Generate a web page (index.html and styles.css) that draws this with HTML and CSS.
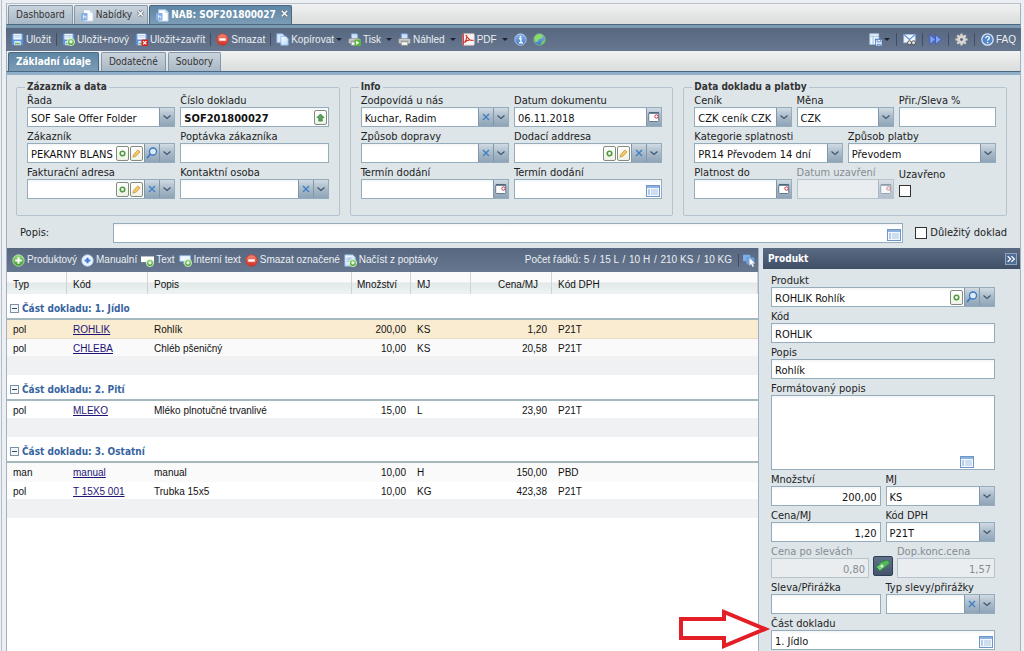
FILE: index.html
```html
<!DOCTYPE html>
<html lang="cs">
<head>
<meta charset="utf-8">
<title>NAB: SOF201800027</title>
<link rel="stylesheet" href="styles.css">
</head>
<body>
<svg class="sprite" aria-hidden="true">
  <defs>
    <linearGradient id="gBlue" x1="0" y1="0" x2="0" y2="1"><stop offset="0" stop-color="#8ab4ea"/><stop offset="1" stop-color="#3f77c4"/></linearGradient>
    <linearGradient id="gGreen" x1="0" y1="0" x2="0" y2="1"><stop offset="0" stop-color="#9bdc7c"/><stop offset="1" stop-color="#3c9a2e"/></linearGradient>
    <linearGradient id="gRed" x1="0" y1="0" x2="0" y2="1"><stop offset="0" stop-color="#f58a78"/><stop offset="1" stop-color="#d02f22"/></linearGradient>
    <linearGradient id="gPage" x1="0" y1="0" x2="1" y2="1"><stop offset="0" stop-color="#ffffff"/><stop offset="1" stop-color="#b9d6f5"/></linearGradient>
  </defs>
  <symbol id="i-disk" viewBox="0 0 16 16"><rect x="1" y="1" width="14" height="14" rx="1" fill="#5c93dc"/><rect x="3" y="1" width="10" height="7" fill="#f4f9ff"/><path d="M4 3h8M4 5h8" stroke="#a9c4e6"/><rect x="4" y="10" width="8" height="5" fill="#e6eef7"/><rect x="5" y="12" width="6" height="2" fill="#6dbb55"/></symbol>
  <symbol id="i-page" viewBox="0 0 16 16"><path d="M3 1h9l3 3v11H3z" fill="#fbfdff" stroke="#a9c4e2"/><path d="M12 1v3h3" fill="#dceafa" stroke="#a9c4e2"/><rect x="0" y="5" width="8" height="9" rx="1" fill="#86aee0"/><path d="M3 7v5M3 9h3v3" fill="none" stroke="#f2f8ff"/></symbol>
  <symbol id="i-plusdot" viewBox="0 0 16 16"><circle cx="11" cy="11" r="4.500" fill="url(#gGreen)" stroke="#e7f7df"/><path d="M9 11h4M11 9v4" stroke="#fff" stroke-width="1.500"/></symbol>
  <symbol id="i-disknew" viewBox="0 0 16 16"><use href="#i-disk"/><use href="#i-plusdot"/></symbol>
  <symbol id="i-diskclose" viewBox="0 0 16 16"><use href="#i-disk"/><rect x="8" y="8" width="8" height="8" rx="1" fill="#d3251d"/><path d="M10 10l4 4M14 10l-4 4" stroke="#fff" stroke-width="1.500"/></symbol>
  <symbol id="i-minus" viewBox="0 0 16 16"><circle cx="8" cy="8" r="7" fill="url(#gRed)" stroke="#c9362a"/><rect x="4" y="6.500" width="8" height="3" fill="#fff"/></symbol>
  <symbol id="i-plus" viewBox="0 0 16 16"><circle cx="8" cy="8" r="7" fill="url(#gGreen)" stroke="#c4e8b6"/><path d="M4 8h8M8 4v8" stroke="#fff" stroke-width="2.500"/></symbol>
  <symbol id="i-plusblue" viewBox="0 0 16 16"><circle cx="8" cy="8" r="7" fill="#eaf3ff" stroke="#b9d2f0"/><path d="M4.500 8h7M8 4.500v7" stroke="#3f7bd0" stroke-width="2.500"/></symbol>
  <symbol id="i-copy" viewBox="0 0 16 16"><path d="M1 1h7l2 2v9H1z" fill="#d8eaff" stroke="#85b0e4"/><path d="M6 4h6l3 3v8H6z" fill="url(#gPage)" stroke="#85b0e4"/></symbol>
  <symbol id="i-print" viewBox="0 0 16 16"><path d="M4 1h7l1 1v6H4z" fill="#cfe4fb" stroke="#6f9dd0"/><rect x="1" y="7" width="14" height="6" rx="1" fill="#d9d9d9" stroke="#8c8c8c"/><path d="M3 10h10" stroke="#666"/><rect x="4" y="11" width="8" height="4" fill="#fff" stroke="#999"/></symbol>
  <symbol id="i-printgo" viewBox="0 0 16 16"><use href="#i-print"/><rect x="8" y="8" width="8" height="8" rx="1" fill="#58b33f"/><path d="M10 9.500l4 2.500-4 2.500z" fill="#fff"/></symbol>
  <symbol id="i-pdf" viewBox="0 0 16 16"><rect x="1" y="1" width="14" height="14" rx="1" fill="#fbf6f5" stroke="#d9c4c2"/><path d="M1.500 1v14" stroke="#c32b22" stroke-width="1.500"/><path d="M5 3c2 0 1 4-2 9 2-3 6-4 10-3-3 1-6-3-8-6z" fill="none" stroke="#cc2a20" stroke-width="1.300"/></symbol>
  <symbol id="i-info" viewBox="0 0 16 16"><circle cx="8" cy="8" r="7" fill="url(#gBlue)" stroke="#bcd6f5"/><path d="M6 7h2.500v5M6 12h5" stroke="#fff" stroke-width="1.600" fill="none"/><circle cx="8" cy="4.500" r="1.200" fill="#fff"/></symbol>
  <symbol id="i-globe" viewBox="0 0 16 16"><circle cx="8" cy="8" r="7" fill="url(#gBlue)" stroke="#7fca6a"/><path d="M2 6c1-4 6-5 9-4l1 4-4 1-3 4-3-1z" fill="#8bdc68"/><path d="M10 12l4-4 1 1c-1 3-3 5-5 5z" fill="#7bd058"/></symbol>
  <symbol id="i-layout" viewBox="0 0 16 16"><rect x="1" y="1" width="11" height="13" fill="#eef5fd" stroke="#a9c6e4"/><path d="M1 4h11M5 4v10M7 7h4M7 9h3" stroke="#8eb6d8"/><rect x="8" y="8" width="8" height="8" fill="#e9f2ff" stroke="#4f7fc0"/><path d="M10 8v3h4V8M10 16v-2h4v2" stroke="#4f7fc0" fill="none"/></symbol>
  <symbol id="i-mail" viewBox="0 0 16 16"><rect x="1" y="2" width="14" height="10" fill="#f3f8ff" stroke="#9fc0e6"/><path d="M1 2l7 6 7-6" fill="none" stroke="#5c8fcf" stroke-width="1.500"/><circle cx="8" cy="12" r="2.500" fill="#ddd" stroke="#444"/><circle cx="13" cy="12" r="2.500" fill="#ddd" stroke="#444"/></symbol>
  <symbol id="i-ff" viewBox="0 0 16 16"><path d="M1 2l7 6-7 6zM8 2l7 6-7 6z" fill="#7fa2f4" stroke="#3557c8"/></symbol>
  <symbol id="i-gear" viewBox="0 0 16 16"><path d="M8 0.500v15M0.500 8h15M2.700 2.700l10.600 10.600M13.300 2.700L2.700 13.300" stroke="#d8d4cd" stroke-width="2.600"/><circle cx="8" cy="8" r="5.500" fill="#d8d4cd"/><circle cx="8" cy="8" r="2.500" fill="#5d6d86" stroke="#f6f4f0"/></symbol>
  <symbol id="i-help" viewBox="0 0 16 16"><circle cx="8" cy="8" r="7" fill="#4f86c9" stroke="#dcebfb" stroke-width="1.500"/><path d="M5.800 6.500c0-3 4.500-3 4.500-.3 0 1.500-2.200 1.600-2.200 3.300" fill="none" stroke="#fff" stroke-width="1.500"/><circle cx="8.100" cy="11.800" r="1" fill="#fff"/></symbol>
  <symbol id="i-textadd" viewBox="0 0 16 16"><rect x="0" y="3" width="16" height="7" fill="#fff"/><use href="#i-plusdot"/></symbol>
  <symbol id="i-noteadd" viewBox="0 0 16 16"><path d="M1 2h13v7H8l-2 3V9H1z" fill="#eef6ff" stroke="#8fb9e8"/><use href="#i-plusdot"/></symbol>
  <symbol id="i-pageadd" viewBox="0 0 16 16"><path d="M1 1h10l3 3v11H1z" fill="url(#gPage)" stroke="#7fabdc"/><path d="M3 5h7M3 7h8M3 9h6" stroke="#8fb7e3"/><use href="#i-plusdot"/></symbol>
  <symbol id="i-select" viewBox="0 0 16 16"><rect x="0" y="1" width="9" height="8" rx="1" fill="#7eaee8"/><rect x="4" y="4" width="10" height="9" rx="1" fill="#6b9fe0"/><path d="M8 5v9l2-2 2 4 1.500-1-2-3.500h3z" fill="#fff" stroke="#ccc" stroke-width=".5"/></symbol>
  <symbol id="i-chev" viewBox="0 0 10 10"><path d="M1.500 3.500L5 6.500l3.500-3" fill="none" stroke="#3f566e" stroke-width="1.200"/></symbol>
  <symbol id="i-x" viewBox="0 0 10 10"><path d="M2 2l6 6M8 2L2 8" fill="none" stroke="#3f7fc6" stroke-width="1.400"/></symbol>
  <symbol id="i-close" viewBox="0 0 10 10"><path d="M2 2l6 6M8 2L2 8" fill="none" stroke="#5c6b7a" stroke-width="3"/><path d="M2 2l6 6M8 2L2 8" fill="none" stroke="#fff" stroke-width="1.600"/></symbol>
  <symbol id="i-search" viewBox="0 0 12 12"><circle cx="7" cy="4.500" r="3.500" fill="#dcebfa" stroke="#3a78bf" stroke-width="1.300"/><path d="M4.500 7L1 11" stroke="#3a78bf" stroke-width="1.800"/></symbol>
  <symbol id="i-ring" viewBox="0 0 10 10"><circle cx="5" cy="5" r="2.500" fill="#fff" stroke="#4f9a3d" stroke-width="1.800"/></symbol>
  <symbol id="i-pencil" viewBox="0 0 10 10"><path d="M1 9l1-3 4.500-5L9 3.200 4.500 8z" fill="#f4c862" stroke="#c89036" stroke-width=".8"/></symbol>
  <symbol id="i-up" viewBox="0 0 10 10"><path d="M5 1l4 4H7v4H3V5H1z" fill="#55a559" stroke="#2d7d38" stroke-width=".7"/></symbol>
  <symbol id="i-cal" viewBox="0 0 12 12"><rect x=".7" y="1.500" width="10" height="9" rx="1" fill="#fff" stroke="#66788c"/><path d="M1 2h10" stroke="#4a5f78" stroke-width="1.500"/><circle cx="8.500" cy="5.500" r="1.700" fill="#fff" stroke="#b8324a"/></symbol>
  <symbol id="i-list" viewBox="0 0 14 12"><rect x=".5" y=".5" width="13" height="11" fill="#f3f8fe" stroke="#6d97cb"/><path d="M1 2h12" stroke="#8db2de" stroke-width="2"/><path d="M5 5h7M5 7h7M5 9h7" stroke="#a9c3e2"/><path d="M2 5h2M2 7h2M2 9h2" stroke="#7ca1d2"/></symbol>
  <symbol id="i-money" viewBox="0 0 16 16"><path d="M1 9l7-5 4 3-7 6z" fill="#6fcf72" stroke="#2f8a42"/><path d="M4 5l8-3 3 3-6 5" fill="#57b760" stroke="#2f8a42"/><circle cx="7" cy="8" r="1.500" fill="#d4f5cf"/></symbol>
  <symbol id="i-expand" viewBox="0 0 12 12"><path d="M2 2.500L5.500 6 2 9.500M6.500 2.500L10 6 6.500 9.500" fill="none" stroke="#fff" stroke-width="1.500"/></symbol>
  <symbol id="i-fold" viewBox="0 0 9 9"><rect x=".5" y=".5" width="8" height="8" fill="#f4f7fa" stroke="#7d8fa3"/><path d="M2 4.500h5" stroke="#32475e"/></symbol>
</svg>

<main class="app">
  <nav class="tabs tabs-main">
    <button class="tab">Dashboard</button>
    <button class="tab tab-file"><svg class="ico"><use href="#i-page"/></svg>Nabídky<svg class="tab-x"><use href="#i-close"/></svg></button>
    <button class="tab tab-file active"><svg class="ico"><use href="#i-page"/></svg>NAB: SOF201800027<svg class="tab-x"><use href="#i-close"/></svg></button>
  </nav>

  <div class="bar bar-main">
    <button class="tool"><svg class="ico"><use href="#i-disk"/></svg>Uložit</button><i class="sep"></i>
    <button class="tool"><svg class="ico"><use href="#i-disknew"/></svg>Uložit+nový</button>
    <button class="tool"><svg class="ico"><use href="#i-diskclose"/></svg>Uložit+zavřít</button><i class="sep"></i>
    <button class="tool"><svg class="ico"><use href="#i-minus"/></svg>Smazat</button><i class="sep"></i>
    <button class="tool menu tight"><svg class="ico"><use href="#i-copy"/></svg>Kopírovat</button>
    <button class="tool menu"><svg class="ico"><use href="#i-printgo"/></svg>Tisk</button>
    <button class="tool menu"><svg class="ico"><use href="#i-print"/></svg>Náhled</button>
    <button class="tool menu"><svg class="ico"><use href="#i-pdf"/></svg>PDF</button>
    <button class="tool" aria-label="Informace"><svg class="ico"><use href="#i-info"/></svg></button>
    <button class="tool" aria-label="Web"><svg class="ico"><use href="#i-globe"/></svg></button>
    <span class="fill"></span>
    <div class="bar-end">
      <button class="tool menu tight" aria-label="Rozložení"><svg class="ico"><use href="#i-layout"/></svg></button><i class="sep"></i>
      <button class="tool" aria-label="Pošta"><svg class="ico"><use href="#i-mail"/></svg></button><i class="sep"></i>
      <button class="tool" aria-label="Další"><svg class="ico"><use href="#i-ff"/></svg></button><i class="sep"></i>
      <button class="tool" aria-label="Nastavení"><svg class="ico"><use href="#i-gear"/></svg></button><i class="sep"></i>
      <button class="tool"><svg class="ico"><use href="#i-help"/></svg>FAQ</button>
    </div>
  </div>

  <nav class="tabs tabs-sub">
    <button class="tab active">Základní údaje</button>
    <button class="tab">Dodatečné</button>
    <button class="tab">Soubory</button>
  </nav>

  <form class="head-form">
    <div class="groups">
      <fieldset>
        <legend>Zázazník a data</legend>
        <div class="row">
          <div class="field"><label for="rada">Řada</label><div class="ctl"><select id="rada"><option>SOF Sale Offer Folder</option></select><span class="trig"><svg><use href="#i-chev"/></svg></span></div></div>
          <div class="field"><label for="cislo">Číslo dokladu</label><div class="ctl"><input class="strong" id="cislo" value="SOF201800027"><button type="button" class="mini" aria-label="Načíst číslo"><svg><use href="#i-up"/></svg></button></div></div>
        </div>
        <div class="row">
          <div class="field"><label for="zak">Zákazník</label><div class="ctl"><input id="zak" value="PEKARNY BLANS"><button type="button" class="mini" aria-label="Otevřít"><svg><use href="#i-ring"/></svg></button><button type="button" class="mini" aria-label="Upravit"><svg><use href="#i-pencil"/></svg></button><button type="button" class="trig" aria-label="Hledat"><svg class="wide"><use href="#i-search"/></svg></button><button type="button" class="trig" aria-label="Rozbalit"><svg><use href="#i-chev"/></svg></button></div></div>
          <div class="field"><label for="popt">Poptávka zákazníka</label><div class="ctl"><input id="popt"></div></div>
        </div>
        <div class="row">
          <div class="field"><label for="fakt">Fakturační adresa</label><div class="ctl"><input id="fakt"><button type="button" class="mini" aria-label="Otevřít"><svg><use href="#i-ring"/></svg></button><button type="button" class="mini" aria-label="Upravit"><svg><use href="#i-pencil"/></svg></button><button type="button" class="trig" aria-label="Vymazat"><svg><use href="#i-x"/></svg></button><button type="button" class="trig" aria-label="Rozbalit"><svg><use href="#i-chev"/></svg></button></div></div>
          <div class="field"><label for="kont">Kontaktní osoba</label><div class="ctl"><input id="kont"><button type="button" class="trig" aria-label="Vymazat"><svg><use href="#i-x"/></svg></button><button type="button" class="trig" aria-label="Rozbalit"><svg><use href="#i-chev"/></svg></button></div></div>
        </div>
      </fieldset>

      <fieldset>
        <legend>Info</legend>
        <div class="row">
          <div class="field"><label for="zodp">Zodpovídá u nás</label><div class="ctl"><input id="zodp" value="Kuchar, Radim"><button type="button" class="trig" aria-label="Vymazat"><svg><use href="#i-x"/></svg></button><button type="button" class="trig" aria-label="Rozbalit"><svg><use href="#i-chev"/></svg></button></div></div>
          <div class="field"><label for="datum">Datum dokumentu</label><div class="ctl"><input id="datum" value="06.11.2018"><button type="button" class="trig" aria-label="Kalendář"><svg class="wide"><use href="#i-cal"/></svg></button></div></div>
        </div>
        <div class="row">
          <div class="field"><label for="dopr">Způsob dopravy</label><div class="ctl"><input id="dopr"><button type="button" class="trig" aria-label="Vymazat"><svg><use href="#i-x"/></svg></button><button type="button" class="trig" aria-label="Rozbalit"><svg><use href="#i-chev"/></svg></button></div></div>
          <div class="field"><label for="dod">Dodací addresa</label><div class="ctl"><input id="dod"><button type="button" class="mini" aria-label="Otevřít"><svg><use href="#i-ring"/></svg></button><button type="button" class="mini" aria-label="Upravit"><svg><use href="#i-pencil"/></svg></button><button type="button" class="trig" aria-label="Vymazat"><svg><use href="#i-x"/></svg></button><button type="button" class="trig" aria-label="Rozbalit"><svg><use href="#i-chev"/></svg></button></div></div>
        </div>
        <div class="row">
          <div class="field"><label for="term1">Termín dodání</label><div class="ctl"><input id="term1"><button type="button" class="trig" aria-label="Kalendář"><svg class="wide"><use href="#i-cal"/></svg></button></div></div>
          <div class="field"><label for="term2">Termín dodání</label><div class="ctl"><input id="term2"><button type="button" class="listbtn" aria-label="Texty"><svg><use href="#i-list"/></svg></button></div></div>
        </div>
      </fieldset>

      <fieldset>
        <legend>Data dokladu a platby</legend>
        <div class="row">
          <div class="field"><label for="cenik">Ceník</label><div class="ctl"><select id="cenik"><option>CZK ceník CZK [</option></select><span class="trig"><svg><use href="#i-chev"/></svg></span></div></div>
          <div class="field"><label for="mena">Měna</label><div class="ctl"><select id="mena"><option>CZK</option></select><span class="trig"><svg><use href="#i-chev"/></svg></span></div></div>
          <div class="field"><label for="prir">Přir./Sleva %</label><div class="ctl"><input id="prir"></div></div>
        </div>
        <div class="row">
          <div class="field"><label for="kat">Kategorie splatnosti</label><div class="ctl"><select id="kat"><option>PR14 Převodem 14 dní</option></select><span class="trig"><svg><use href="#i-chev"/></svg></span></div></div>
          <div class="field"><label for="plat">Způsob platby</label><div class="ctl"><select id="plat"><option>Převodem</option></select><span class="trig"><svg><use href="#i-chev"/></svg></span></div></div>
        </div>
        <div class="row">
          <div class="field"><label for="platdo">Platnost do</label><div class="ctl"><input id="platdo"><button type="button" class="trig" aria-label="Kalendář"><svg class="wide"><use href="#i-cal"/></svg></button></div></div>
          <div class="field off"><label for="uzav">Datum uzavření</label><div class="ctl"><input id="uzav" disabled><button type="button" class="trig" disabled aria-label="Kalendář"><svg class="wide"><use href="#i-cal"/></svg></button></div></div>
          <div class="field check-field"><label for="uzavreno">Uzavřeno</label><input type="checkbox" id="uzavreno"></div>
        </div>
      </fieldset>
    </div>

    <div class="desc">
      <label class="desc-label" for="popis">Popis:</label>
      <div class="ctl desc-ctl"><input id="popis"><button type="button" class="listbtn" aria-label="Texty"><svg><use href="#i-list"/></svg></button></div>
      <label class="flag"><input type="checkbox">Důležitý doklad</label>
    </div>
  </form>

  <div class="lower">
    <section class="grid">
      <div class="bar bar-grid">
        <button class="tool"><svg class="ico"><use href="#i-plus"/></svg>Produktový</button>
        <button class="tool"><svg class="ico"><use href="#i-plusblue"/></svg>Manualní</button>
        <button class="tool"><svg class="ico"><use href="#i-textadd"/></svg>Text</button>
        <button class="tool"><svg class="ico"><use href="#i-noteadd"/></svg>Interní text</button>
        <button class="tool"><svg class="ico"><use href="#i-minus"/></svg>Smazat označené</button>
        <button class="tool"><svg class="ico"><use href="#i-pageadd"/></svg>Načíst z poptávky</button>
        <span class="fill"></span>
        <span class="count">Počet řádků: 5 <b>/</b> 15 L <b>/</b> 10 H <b>/</b> 210 KS <b>/</b> 10 KG</span><i class="sep"></i>
        <button class="tool" aria-label="Výběr"><svg class="ico"><use href="#i-select"/></svg></button>
      </div>
      <table>
        <colgroup><col class="c-typ"><col class="c-kod"><col><col class="c-mn"><col class="c-mj"><col class="c-cena"><col class="c-dph"></colgroup>
        <thead>
          <tr><th>Typ</th><th>Kód</th><th>Popis</th><th class="num">Množství</th><th>MJ</th><th class="num">Cena/MJ</th><th>Kód DPH</th></tr>
        </thead>
        <tbody>
          <tr class="group"><td colspan="7"><svg><use href="#i-fold"/></svg>Část dokladu: 1. Jídlo</td></tr>
          <tr class="sel"><td>pol</td><td><a href="#">ROHLIK</a></td><td>Rohlík</td><td class="num">200,00</td><td>KS</td><td class="num">1,20</td><td>P21T</td></tr>
          <tr class="last alt"><td>pol</td><td><a href="#">CHLEBA</a></td><td>Chléb pšeničný</td><td class="num">10,00</td><td>KS</td><td class="num">20,58</td><td>P21T</td></tr>
          <tr class="sum"><td colspan="7"></td></tr>
        </tbody>
        <tbody>
          <tr class="group"><td colspan="7"><svg><use href="#i-fold"/></svg>Část dokladu: 2. Pití</td></tr>
          <tr class="last"><td>pol</td><td><a href="#">MLEKO</a></td><td>Mléko plnotučné trvanlivé</td><td class="num">15,00</td><td>L</td><td class="num">23,90</td><td>P21T</td></tr>
          <tr class="sum"><td colspan="7"></td></tr>
        </tbody>
        <tbody>
          <tr class="group"><td colspan="7"><svg><use href="#i-fold"/></svg>Část dokladu: 3. Ostatní</td></tr>
          <tr class="alt"><td>man</td><td><a href="#">manual</a></td><td>manual</td><td class="num">10,00</td><td>H</td><td class="num">150,00</td><td>PBD</td></tr>
          <tr class="last"><td>pol</td><td><a href="#">T 15X5 001</a></td><td>Trubka 15x5</td><td class="num">10,00</td><td>KG</td><td class="num">423,38</td><td>P21T</td></tr>
          <tr class="sum"><td colspan="7"></td></tr>
        </tbody>
      </table>
    </section>

    <aside class="side">
      <header class="side-head"><h2>Produkt</h2><button class="expand" aria-label="Sbalit"><svg><use href="#i-expand"/></svg></button></header>
      <form class="side-form">
        <div class="field"><label for="p-prod">Produkt</label><div class="ctl"><input id="p-prod" value="ROHLIK Rohlík"><button type="button" class="mini" aria-label="Otevřít"><svg><use href="#i-ring"/></svg></button><button type="button" class="trig" aria-label="Hledat"><svg class="wide"><use href="#i-search"/></svg></button><button type="button" class="trig" aria-label="Rozbalit"><svg><use href="#i-chev"/></svg></button></div></div>
        <div class="field"><label for="p-kod">Kód</label><div class="ctl"><input id="p-kod" value="ROHLIK"></div></div>
        <div class="field"><label for="p-popis">Popis</label><div class="ctl"><input id="p-popis" value="Rohlík"></div></div>
        <div class="field"><label for="p-form">Formátovaný popis</label><div class="ctl area"><textarea id="p-form"></textarea><button type="button" class="listbtn" aria-label="Texty"><svg><use href="#i-list"/></svg></button></div></div>
        <div class="row">
          <div class="field"><label for="p-mn">Množství</label><div class="ctl"><input class="right" id="p-mn" value="200,00"></div></div>
          <div class="field"><label for="p-mj">MJ</label><div class="ctl"><select id="p-mj"><option>KS</option></select><span class="trig"><svg><use href="#i-chev"/></svg></span></div></div>
        </div>
        <div class="row">
          <div class="field"><label for="p-cena">Cena/MJ</label><div class="ctl"><input class="right" id="p-cena" value="1,20"></div></div>
          <div class="field"><label for="p-dph">Kód DPH</label><div class="ctl"><select id="p-dph"><option>P21T</option></select><span class="trig"><svg><use href="#i-chev"/></svg></span></div></div>
        </div>
        <div class="row money-row">
          <div class="field off"><label for="p-sl">Cena po slevách</label><div class="ctl"><input class="right" id="p-sl" value="0,80" disabled></div></div>
          <button type="button" class="money" aria-label="Cenotvorba"><svg><use href="#i-money"/></svg></button>
          <div class="field off"><label for="p-dop">Dop.konc.cena</label><div class="ctl"><input class="right" id="p-dop" value="1,57" disabled></div></div>
        </div>
        <div class="row">
          <div class="field"><label for="p-prir">Sleva/Přirážka</label><div class="ctl"><input id="p-prir"></div></div>
          <div class="field"><label for="p-typ">Typ slevy/přirážky</label><div class="ctl"><input id="p-typ"><button type="button" class="trig" aria-label="Vymazat"><svg><use href="#i-x"/></svg></button><button type="button" class="trig" aria-label="Rozbalit"><svg><use href="#i-chev"/></svg></button></div></div>
        </div>
        <div class="field marked"><label for="p-cast">Část dokladu</label><div class="ctl"><input id="p-cast" value="1. Jídlo"><button type="button" class="listbtn" aria-label="Texty"><svg><use href="#i-list"/></svg></button></div>
          <svg class="arrow" viewBox="0 0 92 42"><path d="M2 11h43V4l41 17-41 17v-8H2z" fill="#fff" stroke="#e41e26" stroke-width="4"/></svg>
        </div>
      </form>
    </aside>
  </div>
</main>
</body>
</html>
```

FILE: styles.css
```css
* { box-sizing: border-box; }

body {
  margin: 0;
  background: #eceff3;
  color: #222;
  font: 11px/14px "DejaVu Sans Condensed", "Noto Sans", sans-serif;
}

button, input, select, textarea {
  margin: 0;
  padding: 0;
  border: 0;
  background: none;
  color: inherit;
  font: inherit;
}

svg { display: block; flex: none; }
.sprite { position: absolute; width: 0; height: 0; }
.fill { flex: 1; }

.app {
  display: flex;
  flex-direction: column;
  min-height: 100vh;
  margin: 0 3px 0 1px;
  padding-top: 3px;
  border-left: 1px solid #b6bec8;
  padding-left: 4px;
  background: #eceff3;
}

/* tabs */
.tabs {
  display: flex;
  align-items: flex-end;
  gap: 2px;
  padding: 1px 1px 0;
  border-left: 1px solid #a3b1bf;
  border-right: 1px solid #a3b1bf;
  border-bottom: 1px solid #4c6780;
  background: linear-gradient(#f2f2f2, #dadddd);
}
.tabs-main { gap: 1px; border-top: 1px solid #b9c0c9; }

.tab {
  display: flex;
  align-items: center;
  height: 19px;
  padding: 0 7px;
  border: 1px solid #8297ab;
  border-bottom: 0;
  border-radius: 2px 2px 0 0;
  background: linear-gradient(#c9d3dc, #a9b8c6);
  color: #333;
  font-size: 10px;
  white-space: nowrap;
}
.tab.active {
  background: linear-gradient(#5d86a6, #7c9cb5);
  border-color: #4c6780;
  color: #fff;
  font-weight: bold;
}
.tab-file { padding: 0 2px 0 6px; }
.tab .ico { margin-right: 2px; }
.tab-x { align-self: flex-start; width: 9px; height: 9px; margin: 3px 0 0 4px; }

.ico { width: 13px; height: 13px; }

/* toolbars */
.bar {
  display: flex;
  align-items: center;
  background: linear-gradient(#56677f, #66778f);
  color: #eceff4;
  font: 10px/14px "Liberation Sans", Arial, sans-serif;
  white-space: nowrap;
}
.bar-main {
  height: 26px;
  padding: 0 2px;
  border-top: 3px solid #7b9bb3;
}
.bar-grid { height: 24px; padding-left: 3px; }
.bar-end { display: flex; align-items: center; }
.tool {
  display: flex;
  align-items: center;
  gap: 2px;
  padding: 0 3px;
}
.bar-grid .tool { padding: 0 2px; }
.sep { width: 1px; height: 13px; margin: 0 2px; background: #3f4e63; }
.bar-end .sep { margin: 0 3px; }
.menu::after {
  content: "";
  margin-left: 3px;
  border: 3px solid transparent;
  border-top-color: #1b2430;
  border-bottom: 0;
}
.tight::after { margin-left: 0; }

/* document header */
.head-form {
  padding: 6px 13px 5px 9px;
  border: 1px solid #a3b1bf;
  border-top: 3px solid #8fb0c8;
  border-bottom: 0;
  background: #dde5e9;
}
.groups { display: flex; gap: 10px; }
fieldset {
  flex: 1;
  min-width: 0;
  margin: 0;
  padding: 0 10px 16px;
  border: 1px solid #b4c3cd;
  border-radius: 2px;
}
legend {
  padding: 0 2px;
  margin-left: -2px;
  color: #333;
  font-weight: bold;
  font-size: 10px;
  line-height: 12px;
}
.row { display: flex; gap: 5px; }
.row + .row { margin-top: 2px; }
.field { flex: 1; min-width: 0; }
.field > label { display: block; height: 14px; line-height: 16px; white-space: nowrap; }

.ctl {
  position: relative;
  display: flex;
  height: 20px;
  border: 1px solid #95acbc;
  background: linear-gradient(#f2f4f5, #fff 3px);
}
.ctl input, .ctl select {
  flex: 1;
  width: 0;
  min-width: 0;
  padding: 3px 3px 0;
  color: #111;
}
.ctl select { appearance: none; }
.ctl .strong { font-weight: bold; }
.ctl .right { text-align: right; }

.trig {
  display: flex;
  align-items: center;
  justify-content: center;
  flex: none;
  width: 15px;
  border-left: 1px solid #7f96ab;
  background: linear-gradient(#d0dae3, #a9bac9 50%, #8fa4b7);
}
.trig svg { width: 10px; height: 10px; }
.trig .wide { width: 12px; height: 12px; }
span.trig { pointer-events: none; }

.mini {
  display: flex;
  align-items: center;
  justify-content: center;
  flex: none;
  align-self: center;
  width: 13px;
  height: 15px;
  margin-right: 1px;
  border: 1px solid #848c80;
  border-radius: 2px;
  background: linear-gradient(#fff, #eef2e6);
}
.mini svg { width: 9px; height: 9px; }

.listbtn { align-self: flex-end; margin: 0 1px 1px 0; }
.listbtn svg { width: 14px; height: 12px; }

.off { color: #858c92; }
.off .ctl { background: #e9edef; border-color: #b7c4cd; }
.off .ctl input { color: #858c92; }
.off .trig { opacity: .6; }

input[type="checkbox"] {
  appearance: none;
  display: block;
  width: 12px;
  height: 12px;
  border: 1px solid #333;
  background: #fff;
}
.check-field { padding-top: 2px; }
.check-field input { margin-top: 4px; }

.desc { display: flex; align-items: center; margin-top: 7px; }
.desc-label { width: 97px; padding-left: 4px; }
.desc-ctl { flex: 1; }
.flag { display: flex; align-items: center; gap: 3px; margin-left: 12px; }

/* lower area */
.lower {
  flex: 1;
  display: flex;
  gap: 4px;
  border: 1px solid #a3b1bf;
  border-width: 0 1px;
  background: #dde5ec;
}

.grid { flex: 1; min-width: 0; border-right: 1px solid #a3b1bf; background: #fff; }
.count { margin-right: 4px; }
.count b { margin: 0 1px; font-weight: normal; }
table {
  width: 100%;
  table-layout: fixed;
  border-collapse: separate;
  border-spacing: 0;
  color: #111;
  font: 10px/13px "Liberation Sans", Arial, sans-serif;
}
.c-typ, .c-mj { width: 60px; }
.c-kod { width: 81px; }
.c-mn { width: 59px; }
.c-cena { width: 81px; }
.c-dph { width: 206px; }
th, td { padding: 3px 5px 0 6px; text-align: left; vertical-align: top; white-space: nowrap; }
th {
  height: 22px;
  padding-top: 6px;
  border-right: 1px solid #cdd3d6;
  background: linear-gradient(#fafafa 45%, #e2e9e9 50%, #eef2f2);
  font-weight: normal;
}
td { height: 19px; }
th.num, td.num { text-align: right; }
th.num { padding: 6px 13px 0 0; }
.last td { height: 17px; }
.sel td { background: #faecd0; border-bottom: 1px solid #e8dcc4; }
.alt td { background: #fafafa; }
.sum td { height: 19px; padding: 0; background: #eff1f2; }
.group td {
  height: 26px;
  padding: 8px 0 0 3px;
  border-bottom: 2px solid #a5b8bd;
  color: #3764a0;
  font: bold 10px/13px "DejaVu Sans Condensed", "Noto Sans", sans-serif;
}
.group svg { display: inline-block; width: 9px; height: 9px; margin-right: 3px; vertical-align: -1px; }
td a { color: #1d1478; }

.side { flex: none; width: 25%; min-width: 257px; background: #dde5e9; }
.side-head {
  display: flex;
  align-items: center;
  justify-content: space-between;
  height: 21px;
  padding: 0 3px 0 5px;
  background: linear-gradient(#5a6a81, #3f4f68);
  color: #fff;
}
.side-head h2 { margin: 0; font-size: 10px; line-height: 14px; }
.expand { padding: 0; border: 1px solid #8fa3bd; background: #4f6c94; }
.expand svg { width: 10px; height: 10px; }

.side-form {
  display: flex;
  flex-direction: column;
  gap: 2px;
  padding: 4px 25px 1px 8px;
}
.side-form .field { flex: 1 1 auto; }
.side-form .row .field { flex: 1 1 0; }
.side-form .row + .row { margin-top: 0; }
.area { height: 75px; }
.area textarea { flex: 1; width: 0; padding: 2px 3px; resize: none; outline: 0; }
.area .listbtn { margin-right: 20px; }
.money {
  display: flex;
  align-self: flex-end;
  margin-bottom: 2px;
  padding: 1px;
  border: 1px solid #2f3e54;
  border-radius: 2px;
  background: linear-gradient(#60718a, #43536b);
}
.money svg { width: 16px; height: 16px; }
.money-row { gap: 4px; }

.marked { position: relative; }
.arrow { position: absolute; right: 100%; top: -8px; width: 92px; height: 42px; }
```
